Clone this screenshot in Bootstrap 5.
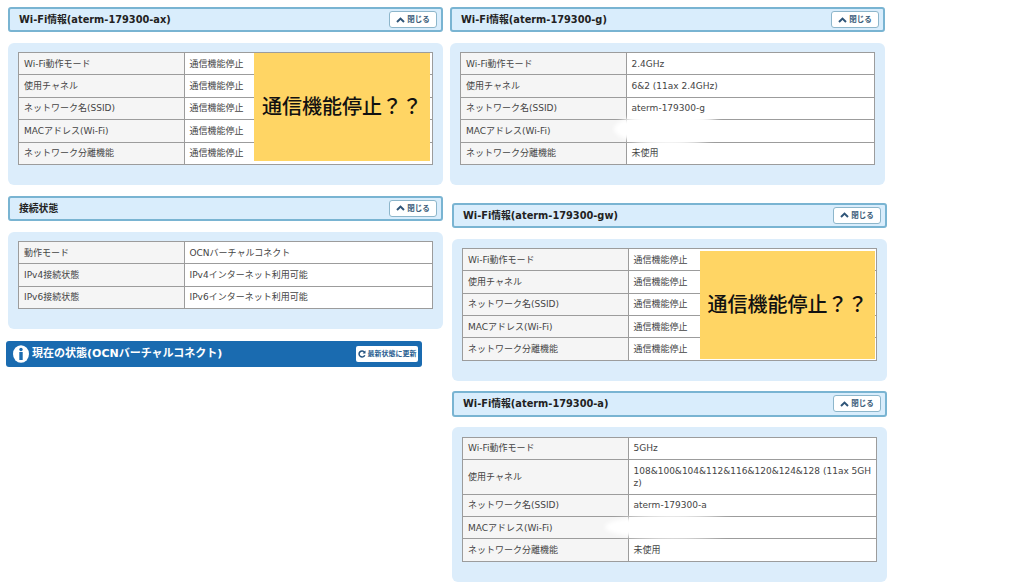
<!DOCTYPE html>
<html lang="ja">
<head>
<meta charset="utf-8">
<title>Wi-Fi情報</title>
<link rel="stylesheet" href="https://cdn.jsdelivr.net/npm/bootstrap@5.3.0/dist/css/bootstrap.min.css">
<style>
body{background:#fff;color:#333;font-family:"DejaVu Sans","Noto Sans CJK JP",sans-serif;font-size:9px;overflow:hidden}
.left-col{width:435px;margin:7px 0 0 8px;flex:none}
.right-col{width:437px;margin:7px 0 0 7px;flex:none}
.sec-head{height:25px;background:#d9edfc;border:2px solid #79b4d2;border-radius:3px;padding:0 4px 0 9px;margin-bottom:11px}
.sec-title{font-family:"DejaVu Sans","Noto Sans CJK JP",sans-serif;font-size:9.8px;font-weight:700;color:#222;margin:0}
.close-btn{width:48px;height:17px;padding:0;background:#fff;border:1px solid #8db6cb;border-radius:3px;color:#3d5f7c;font-size:7.5px;font-weight:700;line-height:1;gap:2px}
.close-btn:hover{background:#fff;color:#3d5f7c;border-color:#8db6cb}
.sec-panel{background:#dcedfb;border-radius:6px;padding:9px 10px 20px;margin-bottom:11px}
.info-wrap{position:relative}
.info-table{table-layout:fixed;margin:0;border-collapse:collapse;border:1px solid #8e8e8e;font-size:9px;color:#333;width:100%}
.info-table th,.info-table td{border:1px solid #9c9c9c;padding:4.7px 4.5px;line-height:12px;vertical-align:middle;font-weight:400;word-break:break-all;box-shadow:none}
.info-table th{width:166px;background:#f5f5f5;color:#444;padding-left:5px}
.info-table td{background:#fff;color:#444}
.stop-note{position:absolute;background:#ffd564;color:#111;font-family:"Noto Sans CJK JP",sans-serif;font-size:20px;font-weight:500;line-height:1;padding-bottom:2px}
.note-a{left:236px;top:1px;width:176px;height:108px}
.note-b{left:238px;top:3px;width:175px;height:108px}
.smudge{position:absolute;background:#fff;border-radius:50%;filter:blur(2px)}
.smudge-g{left:154px;top:61px;width:110px;height:32px}
.smudge-a{left:143px;top:78px;width:135px;height:24px}
.status-bar{width:416px;height:26px;margin:12px 0 0 -2px;background:#1a6bb0;border-radius:3px;padding:0 4px 0 7px}
.status-title{font-family:"DejaVu Sans","Noto Sans CJK JP",sans-serif;font-size:11px;font-weight:700;color:#fff;margin:0;gap:3px}
.update-btn{width:62px;height:16px;padding:0;background:#fff;border:0;border-radius:2px;color:#2a5f92;font-size:7px;font-weight:700;line-height:1;gap:2px;white-space:nowrap}
.update-btn:hover{background:#fff;color:#2a5f92}
.gap-wide{margin-top:18px}
.nudge{margin-left:2px;width:435px}
.first-right{width:435px}
.head-tall{height:26px;margin-bottom:10px}
.panel-tight{margin-bottom:10px}
.panel-last{padding-top:10px;padding-bottom:20px}
</style>
</head>
<body>
<div class="d-flex align-items-start">
  <div class="left-col">
    <div class="sec-head d-flex align-items-center justify-content-between">
      <h2 class="sec-title">Wi-Fi情報(aterm-179300-ax)</h2>
      <button type="button" class="btn close-btn d-flex align-items-center justify-content-center"><svg width="9" height="6" viewBox="0 0 9 6"><path d="M1 5 4.500 1.600 8 5" fill="none" stroke="#2f5578" stroke-width="2"/></svg>閉じる</button>
    </div>
    <div class="sec-panel">
      <div class="info-wrap">
        <table class="table info-table">
          <tr><th>Wi-Fi動作モード</th><td>通信機能停止</td></tr>
          <tr><th>使用チャネル</th><td>通信機能停止</td></tr>
          <tr><th>ネットワーク名(SSID)</th><td>通信機能停止</td></tr>
          <tr><th>MACアドレス(Wi-Fi)</th><td>通信機能停止</td></tr>
          <tr><th>ネットワーク分離機能</th><td>通信機能停止</td></tr>
        </table>
        <div class="stop-note note-a d-flex align-items-center justify-content-center">通信機能停止？？</div>
      </div>
    </div>
    <div class="sec-head d-flex align-items-center justify-content-between">
      <h2 class="sec-title">接続状態</h2>
      <button type="button" class="btn close-btn d-flex align-items-center justify-content-center"><svg width="9" height="6" viewBox="0 0 9 6"><path d="M1 5 4.500 1.600 8 5" fill="none" stroke="#2f5578" stroke-width="2"/></svg>閉じる</button>
    </div>
    <div class="sec-panel mb-0">
      <table class="table info-table">
        <tr><th>動作モード</th><td>OCNバーチャルコネクト</td></tr>
        <tr><th>IPv4接続状態</th><td>IPv4インターネット利用可能</td></tr>
        <tr><th>IPv6接続状態</th><td>IPv6インターネット利用可能</td></tr>
      </table>
    </div>
    <div class="status-bar d-flex align-items-center justify-content-between">
      <h2 class="status-title d-flex align-items-center">
        <svg width="16" height="18" viewBox="0 0 16 18"><ellipse cx="8" cy="9" rx="8" ry="8.800" fill="#fff"/><circle cx="8" cy="4.500" r="1.700" fill="#1a6bb0"/><rect x="6.300" y="7" width="3.400" height="8" fill="#1a6bb0"/></svg>
        現在の状態(OCNバーチャルコネクト)
      </h2>
      <button type="button" class="btn update-btn d-flex align-items-center justify-content-center"><svg width="8" height="8" viewBox="0 0 8 8"><path d="M6.500 2.200A3 3 0 1 0 6.800 5.200" fill="none" stroke="#24527f" stroke-width="1.500"/><path d="M7.500 .6V3.600H4.600Z" fill="#24527f"/></svg>最新状態に更新</button>
    </div>
  </div>
  <div class="right-col">
    <div class="first-right">
      <div class="sec-head d-flex align-items-center justify-content-between">
        <h2 class="sec-title">Wi-Fi情報(aterm-179300-g)</h2>
        <button type="button" class="btn close-btn d-flex align-items-center justify-content-center"><svg width="9" height="6" viewBox="0 0 9 6"><path d="M1 5 4.500 1.600 8 5" fill="none" stroke="#2f5578" stroke-width="2"/></svg>閉じる</button>
      </div>
      <div class="sec-panel mb-0">
        <div class="info-wrap">
          <table class="table info-table">
            <tr><th>Wi-Fi動作モード</th><td>2.4GHz</td></tr>
            <tr><th>使用チャネル</th><td>6&amp;2 (11ax 2.4GHz)</td></tr>
            <tr><th>ネットワーク名(SSID)</th><td>aterm-179300-g</td></tr>
            <tr><th>MACアドレス(Wi-Fi)</th><td></td></tr>
            <tr><th>ネットワーク分離機能</th><td>未使用</td></tr>
          </table>
          <div class="smudge smudge-g"></div>
        </div>
      </div>
    </div>
    <div class="nudge gap-wide">
      <div class="sec-head d-flex align-items-center justify-content-between">
        <h2 class="sec-title">Wi-Fi情報(aterm-179300-gw)</h2>
        <button type="button" class="btn close-btn d-flex align-items-center justify-content-center"><svg width="9" height="6" viewBox="0 0 9 6"><path d="M1 5 4.500 1.600 8 5" fill="none" stroke="#2f5578" stroke-width="2"/></svg>閉じる</button>
      </div>
      <div class="sec-panel panel-tight">
        <div class="info-wrap">
          <table class="table info-table">
            <tr><th>Wi-Fi動作モード</th><td>通信機能停止</td></tr>
            <tr><th>使用チャネル</th><td>通信機能停止</td></tr>
            <tr><th>ネットワーク名(SSID)</th><td>通信機能停止</td></tr>
            <tr><th>MACアドレス(Wi-Fi)</th><td>通信機能停止</td></tr>
            <tr><th>ネットワーク分離機能</th><td>通信機能停止</td></tr>
          </table>
          <div class="stop-note note-b d-flex align-items-center justify-content-center">通信機能停止？？</div>
        </div>
      </div>
      <div class="sec-head head-tall d-flex align-items-center justify-content-between">
        <h2 class="sec-title">Wi-Fi情報(aterm-179300-a)</h2>
        <button type="button" class="btn close-btn d-flex align-items-center justify-content-center"><svg width="9" height="6" viewBox="0 0 9 6"><path d="M1 5 4.500 1.600 8 5" fill="none" stroke="#2f5578" stroke-width="2"/></svg>閉じる</button>
      </div>
      <div class="sec-panel panel-last mb-0">
        <div class="info-wrap">
          <table class="table info-table">
            <tr><th>Wi-Fi動作モード</th><td>5GHz</td></tr>
            <tr><th>使用チャネル</th><td>108&amp;100&amp;104&amp;112&amp;116&amp;120&amp;124&amp;128 (11ax 5GHz)</td></tr>
            <tr><th>ネットワーク名(SSID)</th><td>aterm-179300-a</td></tr>
            <tr><th>MACアドレス(Wi-Fi)</th><td></td></tr>
            <tr><th>ネットワーク分離機能</th><td>未使用</td></tr>
          </table>
          <div class="smudge smudge-a"></div>
        </div>
      </div>
    </div>
  </div>
</div>
<script src="https://cdn.jsdelivr.net/npm/bootstrap@5.3.0/dist/js/bootstrap.bundle.min.js"></script>
</body>
</html>
